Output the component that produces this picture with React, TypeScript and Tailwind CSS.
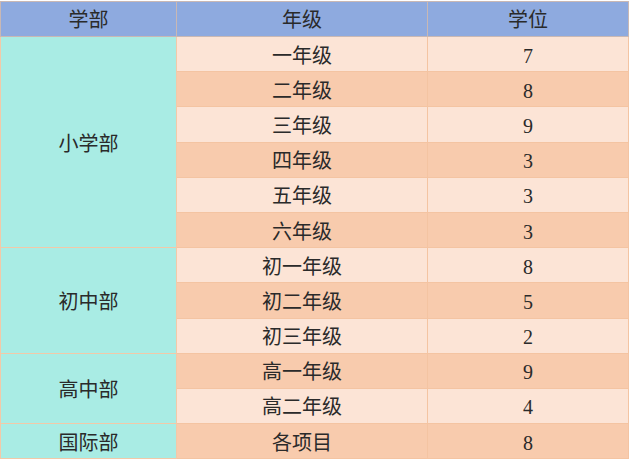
const rows: { dept?: string; span?: number; grade: string; seats: number }[] = [
  { dept: "小学部", span: 6, grade: "一年级", seats: 7 },
  { grade: "二年级", seats: 8 },
  { grade: "三年级", seats: 9 },
  { grade: "四年级", seats: 3 },
  { grade: "五年级", seats: 3 },
  { grade: "六年级", seats: 3 },
  { dept: "初中部", span: 3, grade: "初一年级", seats: 8 },
  { grade: "初二年级", seats: 5 },
  { grade: "初三年级", seats: 2 },
  { dept: "高中部", span: 2, grade: "高一年级", seats: 9 },
  { grade: "高二年级", seats: 4 },
  { dept: "国际部", span: 1, grade: "各项目", seats: 8 },
];

export default function App() {
  return (
    <div className="w-[629px] h-[461px] bg-white pt-px">
      <table
        className="w-[628px] border-collapse table-fixed text-[20px] text-[#2a2a2a] leading-none"
        style={{ fontFamily: '"Liberation Serif", "Noto Sans CJK SC", serif' }}
      >
        <colgroup>
          <col className="w-[176px]" />
          <col className="w-[251px]" />
          <col className="w-[201px]" />
        </colgroup>
        <thead>
          <tr className="h-[35px] bg-[#8eaadf]">
            <th className="font-normal pt-[2px] border border-[#c9b8b4]">学部</th>
            <th className="font-normal pt-[2px] border border-[#c9b8b4]">年级</th>
            <th className="font-normal pt-[2px] border border-[#c9b8b4]">学位</th>
          </tr>
        </thead>
        <tbody>
          {rows.map((r, i) => (
            <tr key={i} className={`h-[35.2px] ${i % 2 === 0 ? "bg-[#fce4d6]" : "bg-[#f8cbad]"}`}>
              {r.dept && (
                <td
                  rowSpan={r.span}
                  className="bg-[#a9ece4] text-center pt-[3px] border border-[#f2c9a8]"
                >
                  {r.dept}
                </td>
              )}
              <td className="text-center pt-[3px] border border-[#f4c4a2]">{r.grade}</td>
              <td className="text-center pt-[3px] border border-[#f4c4a2]">{r.seats}</td>
            </tr>
          ))}
        </tbody>
      </table>
    </div>
  );
}
